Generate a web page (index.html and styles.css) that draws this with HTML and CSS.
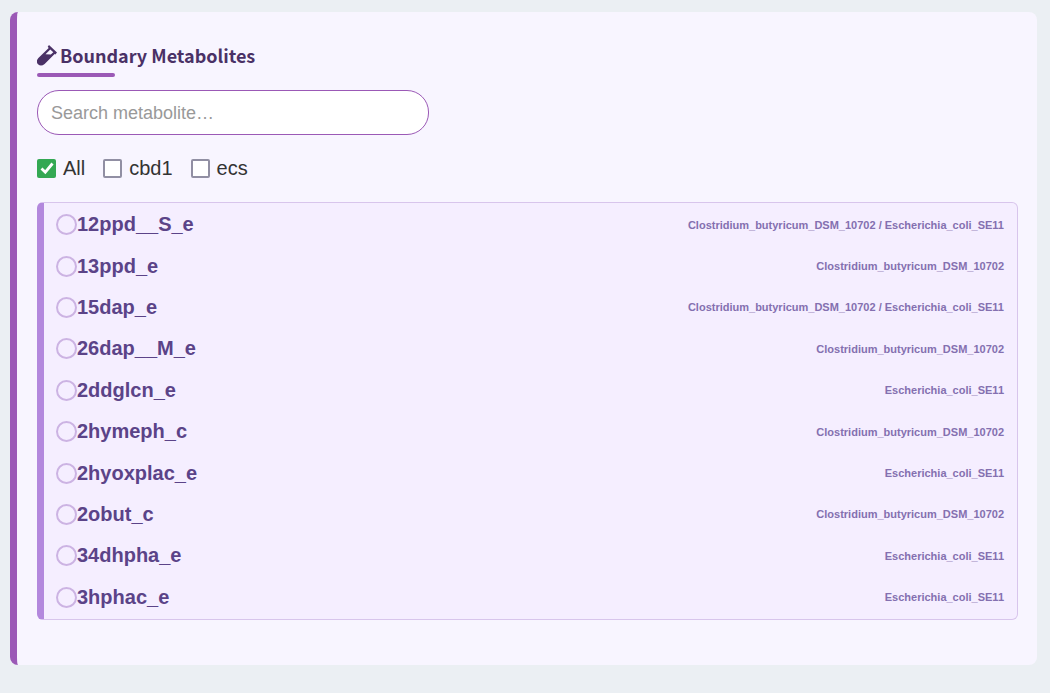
FILE: index.html
```html
<!DOCTYPE html>
<html lang="en">
<head>
<meta charset="utf-8">
<title>Boundary Metabolites</title>
<link rel="stylesheet" href="styles.css">
</head>
<body>
<main class="card">
  <h2 class="title">
    <svg class="title-icon" viewBox="0 0 20 21" aria-hidden="true">
      <path fill="currentColor" fill-rule="evenodd" d="M12 0 20 7.500 18.400 9.400 17.600 9 7.600 19Q4 22 1 19.300Q-1.500 16.200 1.400 13L11.700 3 10.700 1.700ZM13.300 4.500 8.500 9.300 13.800 9.600 16.300 7.200Z"/>
    </svg>
    <span>Boundary Metabolites</span>
  </h2>
  <input class="search" type="text" placeholder="Search metabolite…" aria-label="Search metabolite">
  <div class="filters">
    <label class="filter"><input class="check" type="checkbox" checked>All</label>
    <label class="filter"><input class="check" type="checkbox">cbd1</label>
    <label class="filter"><input class="check" type="checkbox">ecs</label>
  </div>
  <div class="list" role="radiogroup" aria-label="Metabolites">
    <label class="row"><input class="radio" type="radio" name="met"><span class="name">12ppd__S_e</span><span class="species">Clostridium_butyricum_DSM_10702 / Escherichia_coli_SE11</span></label>
    <label class="row"><input class="radio" type="radio" name="met"><span class="name">13ppd_e</span><span class="species">Clostridium_butyricum_DSM_10702</span></label>
    <label class="row"><input class="radio" type="radio" name="met"><span class="name">15dap_e</span><span class="species">Clostridium_butyricum_DSM_10702 / Escherichia_coli_SE11</span></label>
    <label class="row"><input class="radio" type="radio" name="met"><span class="name">26dap__M_e</span><span class="species">Clostridium_butyricum_DSM_10702</span></label>
    <label class="row"><input class="radio" type="radio" name="met"><span class="name">2ddglcn_e</span><span class="species">Escherichia_coli_SE11</span></label>
    <label class="row"><input class="radio" type="radio" name="met"><span class="name">2hymeph_c</span><span class="species">Clostridium_butyricum_DSM_10702</span></label>
    <label class="row"><input class="radio" type="radio" name="met"><span class="name">2hyoxplac_e</span><span class="species">Escherichia_coli_SE11</span></label>
    <label class="row"><input class="radio" type="radio" name="met"><span class="name">2obut_c</span><span class="species">Clostridium_butyricum_DSM_10702</span></label>
    <label class="row"><input class="radio" type="radio" name="met"><span class="name">34dhpha_e</span><span class="species">Escherichia_coli_SE11</span></label>
    <label class="row"><input class="radio" type="radio" name="met"><span class="name">3hphac_e</span><span class="species">Escherichia_coli_SE11</span></label>
  </div>
</main>
</body>
</html>
```
FILE: styles.css
```css
* {
  box-sizing: border-box;
}

body {
  margin: 0;
  padding: 12px 13px 28px 10px;
  background: #ebeff3;
  color: #333;
  font-family: "Liberation Sans", Arial, sans-serif;
}

.card {
  display: flex;
  flex-direction: column;
  align-items: flex-start;
  padding: 30px 19px 45px 20px;
  border-left: 7px solid #9b59b6;
  border-radius: 8px;
  background: #f8f5ff;
}

.title {
  display: grid;
  grid-template-columns: auto auto;
  align-items: center;
  gap: 5px 3px;
  margin: 0 0 13px;
  color: #4a3166;
  font: bold 18px/26px "Noto Sans CJK JP", sans-serif;
}

.title::after {
  content: "";
  grid-column: 1 / -1;
  width: 78px;
  height: 4px;
  border-radius: 2px;
  background: #9b59b6;
}

.title-icon {
  width: 20px;
  height: 21px;
}

.search {
  width: 40%;
  height: 45px;
  padding: 1px 13px 0;
  border: 1px solid #9b59b6;
  border-radius: 22px;
  background: #fff;
  color: #333;
  font: 18px "Liberation Sans", Arial, sans-serif;
}

.search::placeholder {
  color: #999;
}

.filters {
  display: flex;
  gap: 18px;
  margin: 21px 0 22px;
}

.filter {
  display: flex;
  align-items: center;
  gap: 7px;
  font-size: 20px;
  line-height: 24px;
}

.check {
  appearance: none;
  width: 19px;
  height: 19px;
  margin: 0;
  border: 2px solid #918fa3;
  border-radius: 2px;
  background: #fff;
}

.check:checked {
  border: 0;
  background: #34a853 url("data:image/svg+xml,%3Csvg xmlns='http://www.w3.org/2000/svg' viewBox='0 0 18 18'%3E%3Cpath d='M3.500 9.500 7.300 13.200 14.500 4.500' fill='none' stroke='white' stroke-width='2.800'/%3E%3C/svg%3E") center / 18px no-repeat;
}

.list {
  display: grid;
  grid-auto-rows: 1fr;
  align-self: stretch;
  min-height: 418px;
  padding: 1px 13px 1px 12px;
  border: 1px solid #d8c5ec;
  border-left: 7px solid #b388dd;
  border-radius: 6px;
  background: #f5eeff;
}

.row {
  display: flex;
  align-items: center;
}

.radio {
  appearance: none;
  flex: none;
  width: 21px;
  height: 21px;
  margin: 0;
  border: 2px solid #ccb3e3;
  border-radius: 50%;
}

.name {
  color: #5b4388;
  font-size: 20px;
  font-weight: bold;
}

.species {
  margin-left: auto;
  color: #8470b0;
  font-size: 11px;
  line-height: 14px;
  font-weight: bold;
}
```
